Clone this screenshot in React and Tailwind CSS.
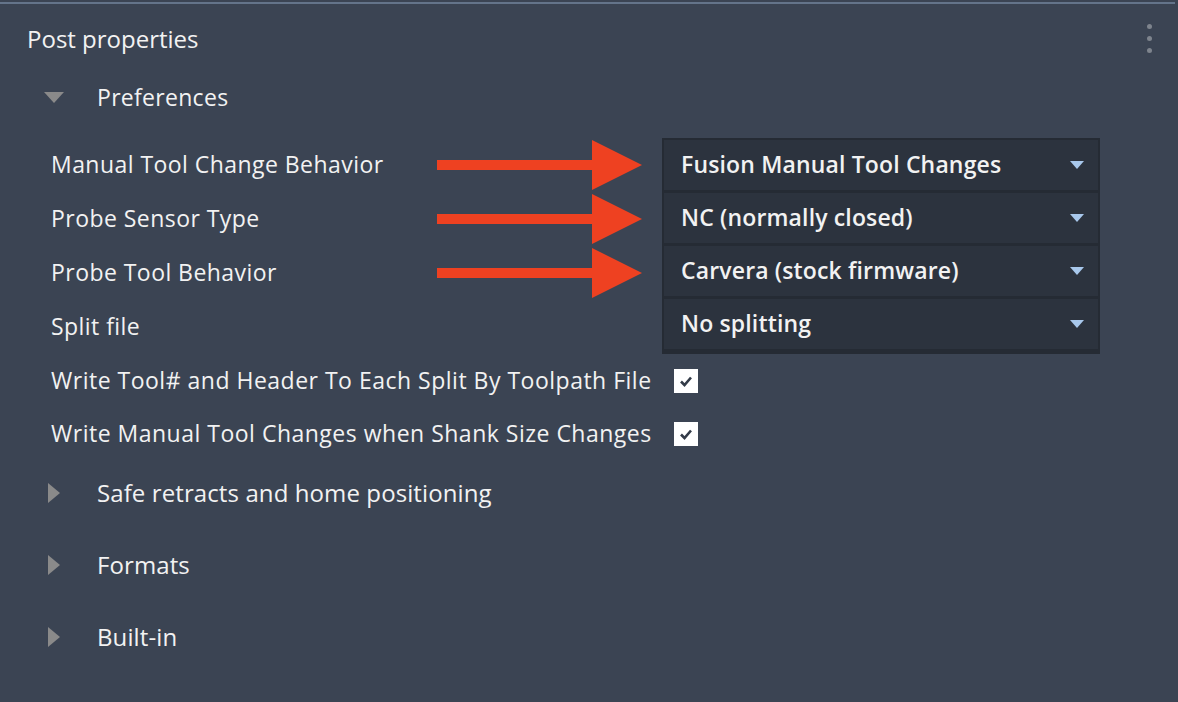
import React from 'react';

const settings = [
    { label: 'Manual Tool Change Behavior', value: 'Fusion Manual Tool Changes', arrow: true },
    { label: 'Probe Sensor Type', value: 'NC (normally closed)', arrow: true },
    { label: 'Probe Tool Behavior', value: 'Carvera (stock firmware)', arrow: true },
    { label: 'Split file', value: 'No splitting', arrow: false },
];

const checks = [
    'Write Tool# and Header To Each Split By Toolpath File',
    'Write Manual Tool Changes when Shank Size Changes',
];

const groups = ['Safe retracts and home positioning', 'Formats', 'Built-in'];

const RedArrow = () => (
    <svg width="205" height="52" viewBox="0 0 205 52" className="shrink-0">
        <rect x="0" y="21" width="160" height="10" fill="#ee4121" />
        <polygon points="155,1 205,26 155,51" fill="#ee4121" />
    </svg>
);

const Caret = () => (
    <svg width="14" height="9" viewBox="0 0 14 9">
        <polygon points="0,0 14,0 7,8" fill="#a8c8ec" />
    </svg>
);

const Check = () => (
    <div className="w-6 h-6 bg-white flex items-center justify-center">
        <svg width="16" height="16" viewBox="0 0 16 16">
            <path d="M3 8.5 L6.5 12 L13 4.5" fill="none" stroke="#333b48" strokeWidth="2.6" />
        </svg>
    </div>
);

export default function App() {
    return (
        <div className="w-[1178px] h-[702px] bg-[#3b4453] text-[#f2f2f2] overflow-hidden" style={{ fontFamily: '"Open Sans", "Noto Sans", sans-serif' }}>
            <div className="pt-[2px]">
                <div className="h-[2px] w-[1175px] bg-[#64748a]" />
            </div>

            {/* header */}
            <div className="h-[70px] flex items-center justify-between pl-[27px] pr-[26px]">
                <span className="text-[24px]">Post properties</span>
                <div className="flex flex-col gap-[7px] -mt-[2px]">
                    <span className="w-[5px] h-[5px] rounded-full bg-[#7e848d]" />
                    <span className="w-[5px] h-[5px] rounded-full bg-[#7e848d]" />
                    <span className="w-[5px] h-[5px] rounded-full bg-[#7e848d]" />
                </div>
            </div>

            {/* Preferences group */}
            <div className="h-[46px] flex items-center">
                <svg width="20" height="11" viewBox="0 0 20 11" className="ml-[44px]">
                    <polygon points="0,0 20,0 10,11" fill="#8a8a8a" />
                </svg>
                <span className="ml-[33px] text-[23px] tracking-[0.3px]">Preferences</span>
            </div>

            <div className="mt-[18px] flex">
                <div className="flex flex-col pl-[51px]">
                    {settings.map((s) => (
                        <div key={s.label} className="h-[54px] flex items-center">
                            <span className="w-[386px] text-[23px] tracking-[0.45px] -mt-[1px]">{s.label}</span>
                            {s.arrow ? <RedArrow /> : <div className="w-[205px]" />}
                        </div>
                    ))}
                </div>
                <div className="ml-[20px] w-[438px] bg-[#252b34] p-[2px] flex flex-col gap-[3px]">
                    {settings.map((s) => (
                        <div key={s.value} className="h-[50px] bg-[#2c333e] flex items-center justify-between pl-[17px] pr-[14px]">
                            <span className="text-[23px] font-semibold tracking-[0.15px] -mt-[1px]">{s.value}</span>
                            <Caret />
                        </div>
                    ))}
                </div>
            </div>

            <div className="flex flex-col pl-[51px]">
                {checks.map((c) => (
                    <div key={c} className="h-[53px] flex items-center">
                        <span className="w-[623px] text-[23px] tracking-[0.5px] whitespace-nowrap">{c}</span>
                        <Check />
                    </div>
                ))}
            </div>

            <div className="flex flex-col -mt-[3px]">
                {groups.map((g) => (
                    <div key={g} className="h-[72px] flex items-center">
                        <svg width="12" height="20" viewBox="0 0 12 20" className="ml-[48px]">
                            <polygon points="0,0 12,10 0,20" fill="#8a8a8a" />
                        </svg>
                        <span className="ml-[37px] text-[24px] tracking-[0.1px]">{g}</span>
                    </div>
                ))}
            </div>
        </div>
    );
}
